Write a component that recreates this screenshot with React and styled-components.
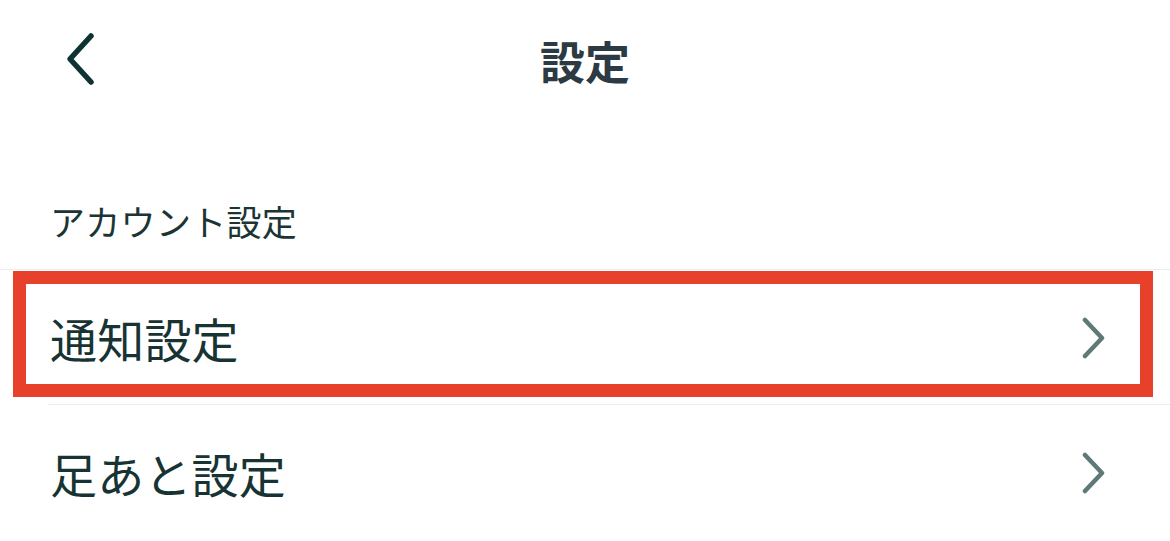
import React from "react";
import styled, { createGlobalStyle } from "styled-components";

const Global = createGlobalStyle`
  html, body { margin: 0; padding: 0; background: #ffffff; }
  body { font-family: "Noto Sans CJK JP", "Noto Sans", sans-serif; }
`;

const Page = styled.div`
  width: 1170px;
  min-height: 541px;
  background: #ffffff;
  overflow: hidden;
`;

const Header = styled.header`
  height: 120px;
  display: grid;
  grid-template-columns: 1fr auto 1fr;
  align-items: center;
`;

const BackButton = styled.button`
  justify-self: start;
  margin-left: 60px;
  margin-top: -2px;
  width: 40px;
  height: 56px;
  padding: 0;
  border: none;
  background: none;
  display: flex;
  align-items: center;
  justify-content: center;
`;

const Title = styled.h1`
  margin: 0;
  font-size: 45px;
  line-height: 45px;
  font-weight: 700;
  color: #2c3a44;
`;

const SectionLabel = styled.div`
  height: 150px;
  box-sizing: border-box;
  display: flex;
  align-items: flex-end;
  padding: 0 0 30px 50px;
  font-size: 35px;
  line-height: 36px;
  letter-spacing: 0.3px;
  color: #1b3535;
  border-bottom: 1px solid #e8eded;
`;

const List = styled.ul`
  list-style: none;
  margin: 0;
  padding: 0;
`;

const Row = styled.li`
  position: relative;
  height: 135px;
  box-sizing: border-box;
  display: flex;
  align-items: center;
  justify-content: space-between;
  padding: 0 63px 0 50px;
  &::after {
    content: "";
    position: absolute;
    left: 48px;
    right: 0;
    bottom: 0;
    border-bottom: 1px solid #e8eded;
  }
  &:last-child::after {
    display: none;
  }
`;

const RowLabel = styled.span`
  font-size: 47px;
  line-height: 48px;
  color: #173333;
  letter-spacing: 0.2px;
`;

const Highlight = styled.div`
  position: absolute;
  left: 13px;
  right: 17px;
  top: 1px;
  bottom: 8px;
  border: 13px solid #e8412b;
  pointer-events: none;
`;

const BackIcon = () => (
  <svg width="34" height="54" viewBox="0 0 34 54" fill="none">
    <path d="M28 4 L7 27 L28 50" stroke="#0f3232" strokeWidth="5.5" strokeLinecap="round" strokeLinejoin="round" />
  </svg>
);

const Chevron = () => (
  <svg width="26" height="42" viewBox="0 0 26 42" fill="none">
    <path d="M4 3 L21 21 L4 39" stroke="#5e7977" strokeWidth="4.5" strokeLinecap="round" strokeLinejoin="round" />
  </svg>
);

const items = [
  { label: "通知設定", highlighted: true },
  { label: "足あと設定", highlighted: false },
];

export default function App() {
  return (
    <Page>
      <Global />
      <Header>
        <BackButton aria-label="戻る">
          <BackIcon />
        </BackButton>
        <Title>設定</Title>
        <span />
      </Header>
      <SectionLabel>アカウント設定</SectionLabel>
      <List>
        {items.map((it) => (
          <Row key={it.label}>
            <RowLabel>{it.label}</RowLabel>
            <Chevron />
            {it.highlighted && <Highlight />}
          </Row>
        ))}
      </List>
    </Page>
  );
}
